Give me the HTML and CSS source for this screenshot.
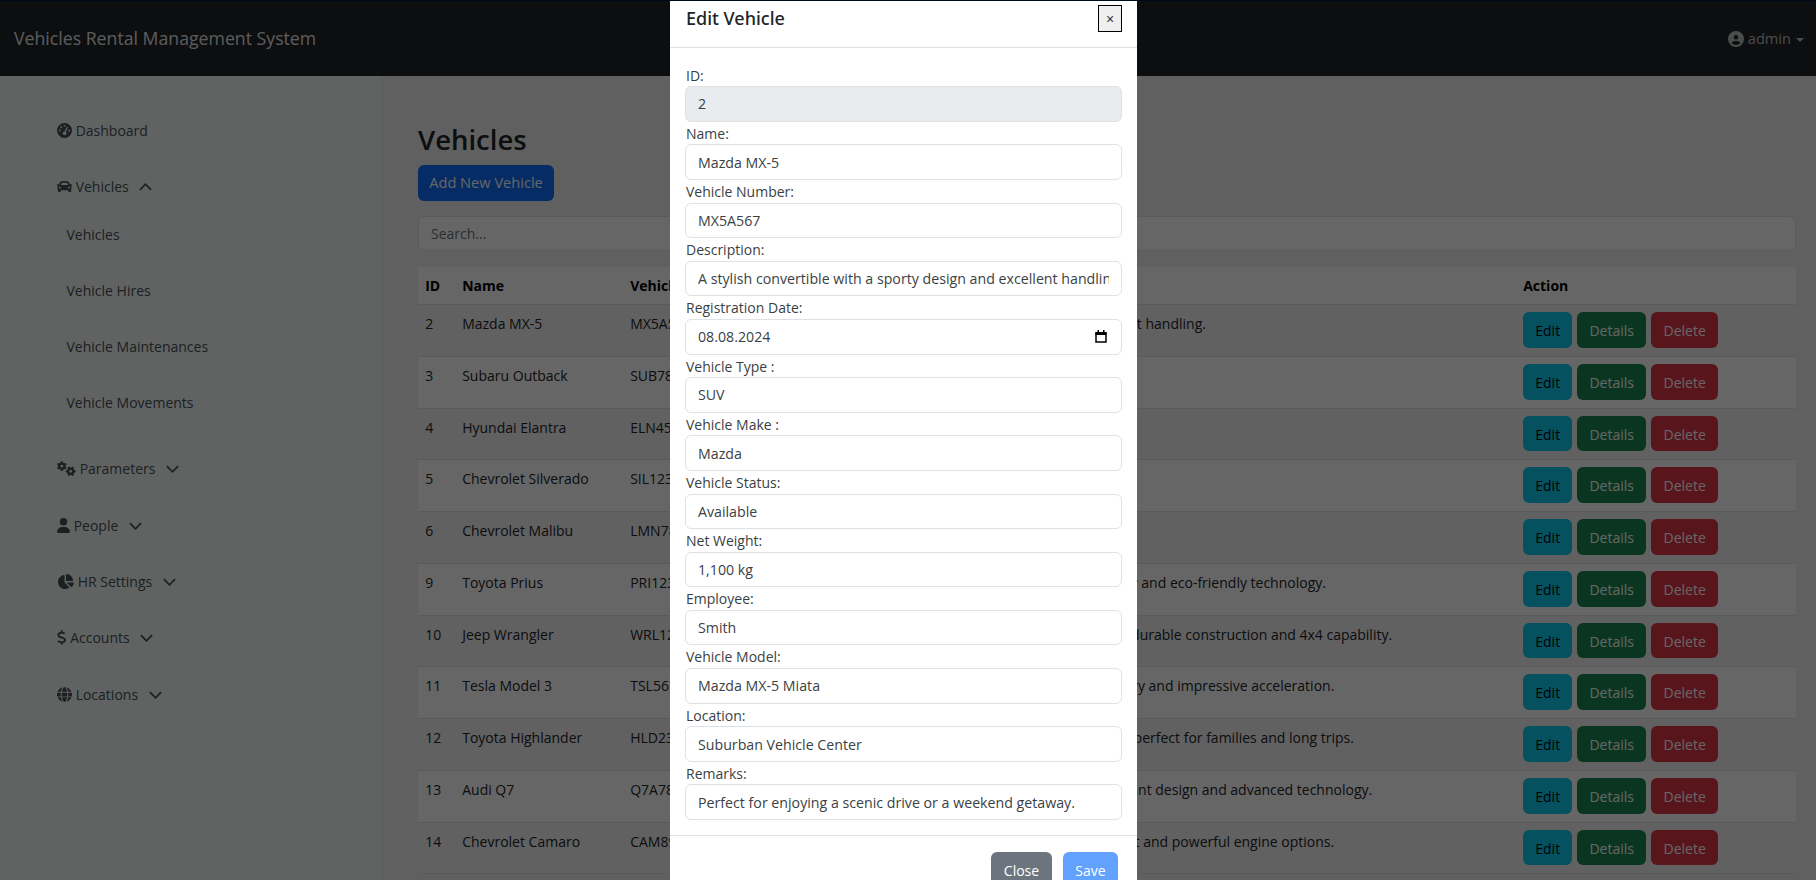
FILE: index.html
```html
<!DOCTYPE html>
<html lang="en">
<head>
  <meta charset="UTF-8" />
  <title>Vehicles Rental Management System</title>
  <link rel="stylesheet" href="styles.css">
</head>
<body>

<svg class="icon-defs" width="0" height="0">
  <symbol id="i-gauge" viewBox="0 0 512 512"><path d="M0 256a256 256 0 1 1 512 0A256 256 0 1 1 0 256zM288 96a32 32 0 1 0 -64 0 32 32 0 1 0 64 0zM256 416c35.3 0 64-28.7 64-64c0-17.4-6.9-33.1-18.1-44.6L366 161.7c5.3-12.1-.2-26.3-12.3-31.6s-26.3 .2-31.6 12.3L257.9 288c-.6 0-1.3 0-1.9 0c-35.3 0-64 28.7-64 64s28.7 64 64 64zM176 144a32 32 0 1 0 -64 0 32 32 0 1 0 64 0zM96 288a32 32 0 1 0 0-64 32 32 0 1 0 0 64zm352-32a32 32 0 1 0 -64 0 32 32 0 1 0 64 0z"/></symbol>
  <symbol id="i-car" viewBox="0 0 512 512"><path d="M499.99 176h-59.87l-16.64-41.6C406.38 91.63 365.57 64 319.5 64h-127c-46.06 0-86.88 27.63-103.99 70.4L71.87 176H12.01C4.2 176-1.53 183.34.37 190.91l6 24C7.7 220.25 12.5 224 18.01 224h20.07C24.65 235.73 16 252.78 16 272v48c0 16.12 6.16 30.67 16 41.93V416c0 17.67 14.33 32 32 32h32c17.67 0 32-14.33 32-32v-32h256v32c0 17.67 14.33 32 32 32h32c17.67 0 32-14.33 32-32v-54.07c9.84-11.25 16-25.8 16-41.93v-48c0-19.22-8.65-36.27-22.07-48H494c5.51 0 10.31-3.75 11.64-9.09l6-24c1.89-7.57-3.84-14.91-11.65-14.91zm-352.06-17.83c7.29-18.22 24.94-30.17 44.57-30.17h127c19.63 0 37.28 11.95 44.57 30.17L384 208H128l19.93-49.83zM96 319.8c-19.2 0-32-12.76-32-31.9S76.8 256 96 256s48 28.71 48 47.85-28.8 15.95-48 15.95zm320 0c-19.2 0-48 3.19-48-15.95S396.8 256 416 256s32 12.76 32 31.9-12.8 31.9-32 31.9z"/></symbol>
  <symbol id="i-gears" viewBox="0 0 640 512"><path d="M308.5 135.3c7.1-6.3 9.9-16.2 6.2-25c-2.3-5.3-4.8-10.5-7.6-15.5L304 89.4c-3-5-6.3-9.9-9.8-14.6c-5.7-7.6-15.7-10.1-24.7-7.1l-28.2 9.3c-10.7-8.8-23-16-36.2-20.9L199 27.1c-1.9-9.3-9.1-16.7-18.5-17.8C173.9 8.4 167.2 8 160.4 8h-.7c-6.8 0-13.5 .4-20.1 1.2c-9.4 1.1-16.6 8.6-18.5 17.8L115 56.1c-13.3 5-25.5 12.1-36.2 20.9L50.5 67.8c-9-3-19-.5-24.7 7.1c-3.5 4.7-6.8 9.6-9.9 14.6l-3 5.3c-2.8 5-5.3 10.2-7.6 15.6c-3.7 8.7-.9 18.6 6.2 25l22.2 19.8C32.6 161.9 32 168.9 32 176s.6 14.1 1.7 20.9L11.5 216.7c-7.1 6.3-9.9 16.2-6.2 25c2.3 5.3 4.8 10.5 7.6 15.6l3 5.2c3 5.1 6.3 9.9 9.9 14.6c5.7 7.6 15.7 10.1 24.7 7.1l28.2-9.3c10.7 8.8 23 16 36.2 20.9l6.1 29.1c1.9 9.3 9.1 16.7 18.5 17.8c6.7 .8 13.5 1.2 20.4 1.2s13.7-.4 20.4-1.2c9.4-1.1 16.6-8.6 18.5-17.8l6.1-29.1c13.3-5 25.5-12.1 36.2-20.9l28.2 9.3c9 3 19 .5 24.7-7.1c3.5-4.7 6.8-9.5 9.8-14.6l3.1-5.4c2.8-5 5.3-10.2 7.6-15.5c3.7-8.7 .9-18.6-6.2-25l-22.2-19.8c1.1-6.8 1.7-13.8 1.7-20.9s-.6-14.1-1.7-20.9l22.2-19.8zM208 176a48 48 0 1 1 -96 0 48 48 0 1 1 96 0zM504.7 500.5c6.3 7.1 16.2 9.9 25 6.2c5.3-2.3 10.5-4.8 15.5-7.6l5.4-3.1c5-3 9.9-6.3 14.6-9.8c7.6-5.7 10.1-15.7 7.1-24.7l-9.3-28.2c8.8-10.7 16-23 20.9-36.2l29.1-6.1c9.3-1.9 16.7-9.1 17.8-18.5c.8-6.7 1.2-13.5 1.2-20.4s-.4-13.7-1.2-20.4c-1.1-9.4-8.6-16.6-17.8-18.5L583.9 307c-5-13.3-12.1-25.5-20.9-36.2l9.3-28.2c3-9 .5-19-7.1-24.7c-4.7-3.5-9.6-6.8-14.6-9.9l-5.3-3c-5-2.8-10.2-5.3-15.6-7.6c-8.7-3.7-18.6-.9-25 6.2l-19.8 22.2c-6.8-1.1-13.8-1.7-20.9-1.7s-14.1 .6-20.9 1.7l-19.8-22.2c-6.3-7.1-16.2-9.9-25-6.2c-5.3 2.3-10.5 4.8-15.6 7.6l-5.2 3c-5.1 3-9.9 6.3-14.6 9.9c-7.6 5.7-10.1 15.7-7.1 24.7l9.3 28.2c-8.8 10.7-16 23-20.9 36.2L315.1 313c-9.3 1.9-16.7 9.1-17.8 18.5c-.8 6.7-1.2 13.5-1.2 20.4s.4 13.7 1.2 20.4c1.1 9.4 8.6 16.6 17.8 18.5l29.1 6.1c5 13.3 12.1 25.5 20.9 36.2l-9.3 28.2c-3 9-.5 19 7.1 24.7c4.7 3.5 9.5 6.8 14.6 9.8l5.4 3.1c5 2.8 10.2 5.3 15.5 7.6c8.7 3.7 18.6 .9 25-6.2l19.8-22.2c6.8 1.1 13.8 1.7 20.9 1.7s14.1-.6 20.9-1.7l19.8 22.2zM464 304a48 48 0 1 1 0 96 48 48 0 1 1 0-96z"/></symbol>
  <symbol id="i-user" viewBox="0 0 448 512"><path d="M224 256A128 128 0 1 0 224 0a128 128 0 1 0 0 256zm-45.7 48C79.8 304 0 383.8 0 482.3C0 498.7 13.3 512 29.7 512H418.3c16.4 0 29.7-13.3 29.7-29.7C448 383.8 368.2 304 269.7 304H178.3z"/></symbol>
  <symbol id="i-pie" viewBox="0 0 576 512"><path d="M304 240V16.6c0-9 7-16.6 16-16.6C443.7 0 544 100.3 544 224c0 9-7.6 16-16.6 16H304zM32 272C32 150.7 122.1 50.3 239 34.3c9.2-1.3 17 6.1 17 15.4V288L412.5 444.5c6.7 6.7 6.2 17.7-1.5 23.1C371.8 495.6 323.8 512 272 512C139.5 512 32 404.6 32 272zm526.4 16c9.3 0 16.6 7.8 15.4 17c-7.7 55.9-34.6 105.6-73.9 142.3c-6 5.6-15.4 5.2-21.2-.7L320 288H558.4z"/></symbol>
  <symbol id="i-dollar" viewBox="0 0 320 512"><path d="M160 0c17.7 0 32 14.3 32 32V67.7c1.6 .2 3.1 .4 4.7 .7c.4 .1 .7 .1 1.1 .2l48 8.8c17.4 3.2 28.9 19.9 25.7 37.2s-19.9 28.9-37.2 25.7l-47.5-8.7c-31.3-4.6-58.9-1.5-78.3 6.2s-27.2 18.3-29 28.1c-2 10.7-.5 16.7 1.2 20.4c1.8 3.9 5.5 8.3 12.8 13.2c16.3 10.7 41.3 17.7 73.7 26.3l2.9 .8c28.6 7.6 63.6 16.8 89.6 33.8c14.2 9.3 27.6 21.9 35.9 39.5c8.5 17.9 10.3 37.9 6.4 59.2c-6.9 38-33.1 63.4-65.6 76.7c-13.7 5.6-28.6 9.2-44.4 11V480c0 17.7-14.3 32-32 32s-32-14.3-32-32V445.1c-.4-.1-.9-.1-1.3-.2l-.2 0 0 0c-24.4-3.8-64.5-14.3-91.5-26.3c-16.1-7.2-23.4-26.1-16.2-42.2s26.1-23.4 42.2-16.2c20.9 9.3 55.3 18.5 75.2 21.6c31.9 4.7 58.2 2 76-5.3c16.9-6.9 24.6-16.9 26.8-28.9c1.9-10.6 .4-16.7-1.3-20.4c-1.9-4-5.6-8.4-13-13.3c-16.4-10.7-41.5-17.7-74-26.3l-2.8-.7 0 0C119.4 279.3 84.4 270 58.4 253c-14.2-9.3-27.5-22-35.8-39.6c-8.4-17.9-10.1-37.9-6.1-59.2C23.7 116 52.3 91.2 84.8 78.3c13.3-5.3 27.9-8.9 43.2-11V32c0-17.7 14.3-32 32-32z"/></symbol>
  <symbol id="i-globe" viewBox="0 0 512 512"><path d="M352 256c0 22.2-1.2 43.6-3.3 64H163.3c-2.2-20.4-3.3-41.8-3.3-64s1.2-43.6 3.3-64H348.7c2.2 20.4 3.3 41.8 3.3 64zm28.8-64H503.9c5.3 20.5 8.1 41.9 8.1 64s-2.8 43.5-8.1 64H380.8c2.1-20.6 3.2-42 3.2-64s-1.1-43.4-3.2-64zm112.6-32H376.7c-10-63.9-29.8-117.4-55.3-151.6c78.3 20.7 142 77.5 171.9 151.6zm-149.1 0H167.7c6.1-36.4 15.5-68.6 27-94.7c10.5-23.6 22.2-40.7 33.5-51.5C239.4 3.2 248.7 0 256 0s16.6 3.2 27.8 13.8c11.3 10.8 23 27.9 33.5 51.5c11.6 26 20.9 58.2 27 94.7zm-209 0H18.6C48.6 85.9 112.2 29.1 190.6 8.4C165.1 42.6 145.3 96.1 135.3 160zM8.1 192H131.2c-2.1 20.6-3.2 42-3.2 64s1.1 43.4 3.2 64H8.1C2.8 299.5 0 278.1 0 256s2.8-43.5 8.1-64zM194.7 446.6c-11.6-26-20.9-58.2-27-94.6H344.3c-6.1 36.4-15.5 68.6-27 94.6c-10.5 23.6-22.2 40.7-33.5 51.5C272.6 508.8 263.3 512 256 512s-16.6-3.2-27.8-13.8c-11.3-10.8-23-27.9-33.5-51.5zM135.3 352c10 63.9 29.8 117.4 55.3 151.6C112.2 482.9 48.6 426.1 18.6 352H135.3zm358.1 0c-30 74.1-93.6 130.9-171.9 151.6c25.5-34.2 45.2-87.7 55.3-151.6H493.4z"/></symbol>
  <symbol id="i-circle-user" viewBox="0 0 512 512"><path d="M399 384.2C376.9 345.8 335.4 320 288 320H224c-47.4 0-88.9 25.8-111 64.2c35.2 39.2 86.2 63.8 143 63.8s107.8-24.7 143-63.8zM0 256a256 256 0 1 1 512 0A256 256 0 1 1 0 256zm256 16a72 72 0 1 0 0-144 72 72 0 1 0 0 144z"/></symbol>
  <symbol id="i-down" viewBox="0 0 14 8"><path d="M1 1l6 6 6-6" fill="none" stroke="currentColor" stroke-width="1.9"/></symbol>
  <symbol id="i-up" viewBox="0 0 14 8"><path d="M1 7l6-6 6 6" fill="none" stroke="currentColor" stroke-width="1.9"/></symbol>
  <symbol id="i-calendar" viewBox="0 0 12 13"><path d="M1 3h10v9H1z" fill="none" stroke="currentColor" stroke-width="1.5"/><path d="M.5 2h11v3H.5zM2.5 0H4v2H2.5zM8 0h1.5v2H8z"/></symbol>
</svg>

<nav class="topbar">
  <a class="brand" href="#">Vehicles Rental Management System</a>
  <a class="user-menu" href="#"><svg class="icon user-icon"><use href="#i-circle-user"/></svg> admin<span class="caret"></span></a>
</nav>

<div class="layout">
  <aside class="sidebar">
    <a class="side-link" href="#"><svg class="icon"><use href="#i-gauge"/></svg> Dashboard</a>
    <a class="side-link" href="#"><svg class="icon"><use href="#i-car"/></svg> Vehicles <svg class="chev"><use href="#i-up"/></svg></a>
    <div class="submenu">
      <a class="side-link sub" href="#">Vehicles</a>
      <a class="side-link sub" href="#">Vehicle Hires</a>
      <a class="side-link sub" href="#">Vehicle Maintenances</a>
      <a class="side-link sub" href="#">Vehicle Movements</a>
    </div>
    <a class="side-link" href="#"><svg class="icon wide"><use href="#i-gears"/></svg> Parameters <svg class="chev"><use href="#i-down"/></svg></a>
    <a class="side-link" href="#"><svg class="icon narrow"><use href="#i-user"/></svg> People <svg class="chev"><use href="#i-down"/></svg></a>
    <a class="side-link" href="#"><svg class="icon pie"><use href="#i-pie"/></svg> HR Settings <svg class="chev"><use href="#i-down"/></svg></a>
    <a class="side-link" href="#"><svg class="icon dollar"><use href="#i-dollar"/></svg> Accounts <svg class="chev"><use href="#i-down"/></svg></a>
    <a class="side-link" href="#"><svg class="icon"><use href="#i-globe"/></svg> Locations <svg class="chev"><use href="#i-down"/></svg></a>
  </aside>

  <main class="content">
    <h3>Vehicles</h3>
    <button class="btn btn-primary add-btn">Add New Vehicle</button>
    <input class="search" type="text" placeholder="Search..." />

    <table class="grid">
      <colgroup>
        <col class="c-id" /><col class="c-name" /><col class="c-num" /><col class="c-desc" /><col class="c-act" />
      </colgroup>
      <thead>
        <tr><th>ID</th><th>Name</th><th>Vehicle Number</th><th>Description</th><th>Action</th></tr>
      </thead>
      <tbody>
        <tr><td>2</td><td>Mazda MX-5</td><td>MX5A567</td><td class="d1">A stylish convertible with a sporty design and excellent handling.</td><td><span class="acts"><button class="btn btn-info">Edit</button><button class="btn btn-success">Details</button><button class="btn btn-danger">Delete</button></span></td></tr>
        <tr><td>3</td><td>Subaru Outback</td><td>SUB7890</td><td>A rugged and reliable crossover.</td><td><span class="acts"><button class="btn btn-info">Edit</button><button class="btn btn-success">Details</button><button class="btn btn-danger">Delete</button></span></td></tr>
        <tr><td>4</td><td>Hyundai Elantra</td><td>ELN4567</td><td>A compact and efficient sedan.</td><td><span class="acts"><button class="btn btn-info">Edit</button><button class="btn btn-success">Details</button><button class="btn btn-danger">Delete</button></span></td></tr>
        <tr><td>5</td><td>Chevrolet Silverado</td><td>SIL1234</td><td>A tough full-size pickup truck.</td><td><span class="acts"><button class="btn btn-info">Edit</button><button class="btn btn-success">Details</button><button class="btn btn-danger">Delete</button></span></td></tr>
        <tr><td>6</td><td>Chevrolet Malibu</td><td>LMN7890</td><td>A comfortable midsize sedan.</td><td><span class="acts"><button class="btn btn-info">Edit</button><button class="btn btn-success">Details</button><button class="btn btn-danger">Delete</button></span></td></tr>
        <tr><td>9</td><td>Toyota Prius</td><td>PRI1234</td><td>The hybrid car known for its outstanding fuel efficiency and eco-friendly technology.</td><td><span class="acts"><button class="btn btn-info">Edit</button><button class="btn btn-success">Details</button><button class="btn btn-danger">Delete</button></span></td></tr>
        <tr><td>10</td><td>Jeep Wrangler</td><td>WRL1234</td><td>An off-road SUV known for its rugged exterior design, durable construction and 4x4 capability.</td><td><span class="acts"><button class="btn btn-info">Edit</button><button class="btn btn-success">Details</button><button class="btn btn-danger">Delete</button></span></td></tr>
        <tr><td>11</td><td>Tesla Model 3</td><td>TSL5678</td><td>A fully electric premium sedan with a long-range battery and impressive acceleration.</td><td><span class="acts"><button class="btn btn-info">Edit</button><button class="btn btn-success">Details</button><button class="btn btn-danger">Delete</button></span></td></tr>
        <tr><td>12</td><td>Toyota Highlander</td><td>HLD2345</td><td>The versatile SUV with three rows of spacious seating, perfect for families and long trips.</td><td><span class="acts"><button class="btn btn-info">Edit</button><button class="btn btn-success">Details</button><button class="btn btn-danger">Delete</button></span></td></tr>
        <tr><td>13</td><td>Audi Q7</td><td>Q7A7890</td><td>A luxury SUV with a spacious cabin, rich interiors, elegant design and advanced technology.</td><td><span class="acts"><button class="btn btn-info">Edit</button><button class="btn btn-success">Details</button><button class="btn btn-danger">Delete</button></span></td></tr>
        <tr><td>14</td><td>Chevrolet Camaro</td><td>CAM8901</td><td>A classic muscle car with bold styling, a throaty exhaust and powerful engine options.</td><td><span class="acts"><button class="btn btn-info">Edit</button><button class="btn btn-success">Details</button><button class="btn btn-danger">Delete</button></span></td></tr>
      </tbody>
    </table>
  </main>
</div>

<div class="backdrop"></div>

<div class="modal">
  <div class="modal-header">
    <span class="modal-title">Edit Vehicle</span>
    <button class="close-x">×</button>
  </div>
  <div class="modal-body">
    <label>ID:</label>
    <input class="field" type="text" value="2" disabled />
    <label>Name:</label>
    <input class="field" type="text" value="Mazda MX-5" />
    <label>Vehicle Number:</label>
    <input class="field" type="text" value="MX5A567" />
    <label>Description:</label>
    <input class="field" type="text" value="A stylish convertible with a sporty design and excellent handling." />
    <label>Registration Date:</label>
    <div class="date-wrap">
      <input class="field" type="text" value="08.08.2024" />
      <svg class="cal"><use href="#i-calendar"/></svg>
    </div>
    <label>Vehicle Type :</label>
    <input class="field" type="text" value="SUV" />
    <label>Vehicle Make :</label>
    <input class="field" type="text" value="Mazda" />
    <label>Vehicle Status:</label>
    <input class="field" type="text" value="Available" />
    <label>Net Weight:</label>
    <input class="field" type="text" value="1,100 kg" />
    <label>Employee:</label>
    <input class="field" type="text" value="Smith" />
    <label>Vehicle Model:</label>
    <input class="field" type="text" value="Mazda MX-5 Miata" />
    <label>Location:</label>
    <input class="field" type="text" value="Suburban Vehicle Center" />
    <label>Remarks:</label>
    <input class="field" type="text" value="Perfect for enjoying a scenic drive or a weekend getaway." />
  </div>
  <div class="modal-footer">
    <button class="btn btn-secondary">Close</button>
    <button class="btn btn-save">Save</button>
  </div>
</div>

</body>
</html>
```

FILE: styles.css
```css
* {
  box-sizing: border-box;
}
html, body {
  height: 880px;
  overflow: hidden;
}
body {
  margin: 0;
  background: #f0f0f0;
  color: #212529;
  font-family: "Open Sans", "Noto Sans", sans-serif;
  font-size: 14px;
  line-height: 21.6px;
}
a {
  text-decoration: none;
}
.icon-defs {
  position: absolute;
}
.icon {
  width: 15px;
  height: 15px;
  fill: currentColor;
  vertical-align: -2px;
}
.icon.wide {
  width: 19px;
}
.icon.narrow {
  width: 13px;
}
.icon.pie {
  width: 17px;
}
.icon.dollar {
  width: 9.5px;
}
.chev {
  width: 13px;
  height: 8px;
  margin-left: 7px;
  vertical-align: 1px;
}

.topbar {
  height: 76px;
  background: #212529;
  display: flex;
  justify-content: space-between;
  align-items: center;
  padding: 0 12px 0 14px;
  border-top: 1px solid #00194d;
}
.brand {
  color: rgba(255, 255, 255, 0.9);
  font-size: 17.7px;
}
.user-menu {
  color: rgba(255, 255, 255, 0.7);
  font-size: 14.6px;
}
.user-icon {
  width: 16px;
  height: 16px;
  vertical-align: -3px;
}
.caret {
  display: inline-block;
  margin-left: 5px;
  border-top: 4.5px solid;
  border-left: 4px solid transparent;
  border-right: 4px solid transparent;
  vertical-align: 2px;
}

.layout {
  display: flex;
  height: 804px;
}
.sidebar {
  width: 383px;
  flex: none;
  background: #f0f8f5;
  padding: 27px 0 0 57px;
  border-right: 1px solid #e6e6e6;
}
.side-link {
  display: block;
  height: 56.3px;
  padding-top: 17px;
  color: #495057;
  line-height: 21.6px;
}
.submenu {
  margin: -9px 0 9.6px;
}
.side-link.sub {
  padding-left: 9.5px;
}

.content {
  flex: 1;
  padding: 0 20px 0 35px;
  min-width: 0;
}
h3 {
  margin: 0;
  padding-top: 44px;
  height: 89px;
  font-size: 27.5px;
  font-weight: 600;
  line-height: 40px;
  color: #212529;
}
.btn {
  border: 1px solid transparent;
  border-radius: 6px;
  padding: 7px 0 5px;
  height: 35.6px;
  font-family: inherit;
  font-size: 14px;
  line-height: 21.6px;
  color: #fff;
}
.btn-primary {
  background: #0d6efd;
}
.btn-info {
  width: 49px;
  background: #0dcaf0;
  color: #000;
}
.btn-success {
  width: 69px;
  background: #198754;
}
.btn-danger {
  width: 67px;
  background: #dc3545;
}
.btn-secondary {
  width: 61px;
  background: #6c757d;
}
.btn-save {
  width: 55px;
  background: #62a1fe;
}
.add-btn {
  display: block;
  width: 136px;
  padding: 6px 0;
  font-size: 14.6px;
}
.search {
  display: block;
  width: 100%;
  height: 35px;
  margin-top: 15px;
  padding: 6px 12px;
  border: 1px solid #dee2e6;
  border-radius: 6px;
  background: #fff;
  font-family: inherit;
  font-size: 14px;
}
.search::placeholder {
  color: #6c757d;
}

.grid {
  width: 1378px;
  margin-top: 16px;
  border-collapse: collapse;
  table-layout: fixed;
  background: #fff;
}
.c-id { width: 37px; }
.c-name { width: 168px; }
.c-num { width: 150px; }
.c-desc { width: 743px; }
.grid th {
  text-align: left;
  font-weight: 700;
  padding: 8px 7.2px;
  height: 38px;
  color: #000;
  border-bottom: 1px solid #dee2e6;
}
.grid td {
  padding: 8px 7.2px;
  height: 51.75px;
  vertical-align: top;
  border-bottom: 1px solid #dee2e6;
  white-space: nowrap;
}
.grid td.d1 {
  padding-left: 14px;
}
.grid tbody tr:nth-child(odd) {
  background: #f2f2f2;
}
.acts {
  display: flex;
  gap: 5px;
  margin-top: -1px;
}

.backdrop {
  position: fixed;
  inset: 0;
  background: rgba(0, 0, 0, 0.6);
}
.modal {
  position: fixed;
  top: 1px;
  left: 670px;
  width: 467px;
  background: #fff;
  color: #212529;
}
.modal-header {
  height: 47px;
  padding: 0 15px 0 16px;
  display: flex;
  justify-content: space-between;
  border-bottom: 1px solid #dee2e6;
}
.modal-title {
  font-family: "Noto Sans", sans-serif;
  font-size: 18px;
  font-weight: 500;
  line-height: 34px;
}
.close-x {
  width: 24px;
  height: 27px;
  margin-top: 4px;
  padding: 0;
  background: #efefef;
  border: 1px solid #000;
  border-radius: 0;
  font-size: 14px;
  color: #333;
}
.modal-body {
  padding: 15.6px 15px 15px;
}
.modal-body label {
  display: block;
  height: 22.6px;
  padding-top: 1px;
  line-height: 22px;
  color: #3a3f44;
  margin-left: 1px;
}
.field {
  display: block;
  width: 100%;
  height: 35.6px;
  padding: 6px 12px;
  background: #fff;
  border: 1px solid #dee2e6;
  border-radius: 6px;
  font-family: inherit;
  font-size: 14.2px;
  color: #3a3f44;
}
.field:disabled {
  background: #e9ecef;
  color: #3a3f44;
}
.date-wrap {
  position: relative;
}
.cal {
  position: absolute;
  right: 15px;
  top: 11px;
  width: 12px;
  height: 13px;
  color: #000;
  fill: #000;
}
.modal-footer {
  height: 120px;
  border-top: 1px solid #dee2e6;
  display: flex;
  justify-content: flex-end;
  gap: 11px;
  padding: 16px 19px;
}
```
